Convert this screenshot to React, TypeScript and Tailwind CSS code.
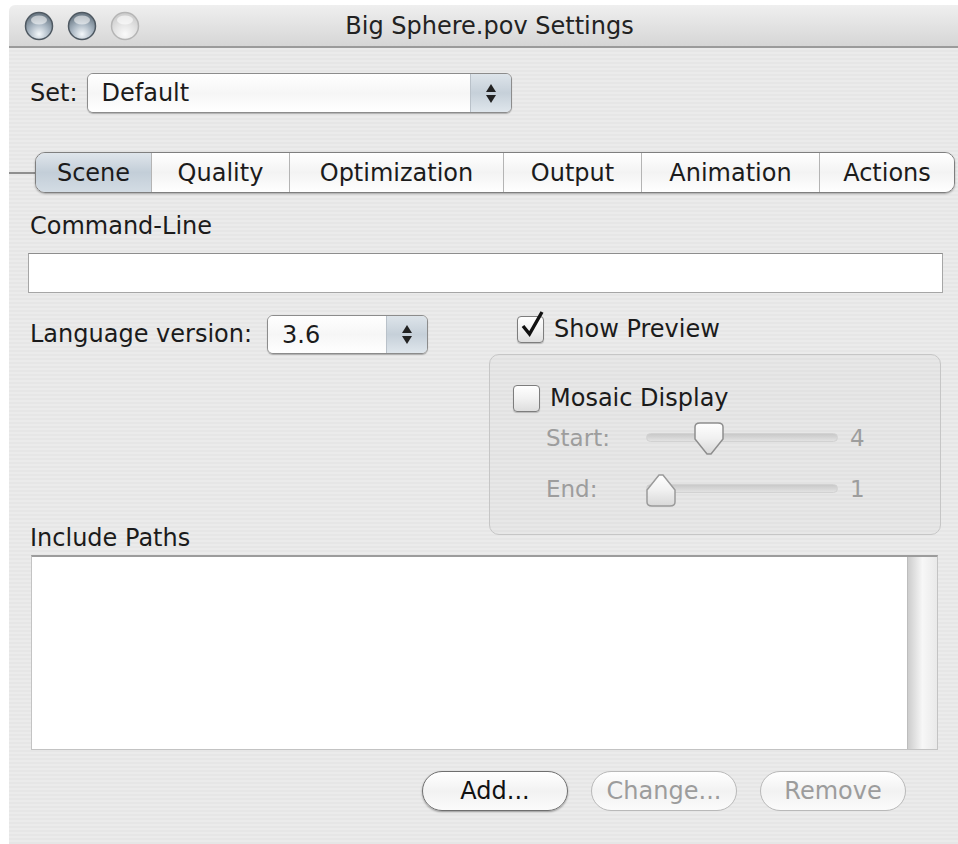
import type { ReactNode } from 'react'

const font = "font-['DejaVu_Sans','Liberation_Sans',sans-serif]"

// Aqua-style popup menu (value + stepper arrows)
function PopUp({ value, className }: { value: string; className: string }) {
  return (
    <div
      className={`flex items-stretch overflow-hidden rounded-[6px] border border-[#8c8c8c] shadow-[0_1px_1px_rgba(0,0,0,0.25)] ${className}`}
    >
      <div className="flex flex-1 items-center bg-gradient-to-b from-[#ffffff] via-[#f6f6f6] to-[#ffffff] pl-[14px] text-[24px] text-[#1b1b1b]">
        {value}
      </div>
      <div className="flex w-[41px] flex-col items-center justify-center gap-[3px] border-l border-[#b9c1c9] bg-gradient-to-b from-[#dde4ea] via-[#c6d0d9] to-[#dfe6ec]">
        <svg width="10" height="8" viewBox="0 0 10 8">
          <path d="M5 0L10 8H0Z" fill="#222" />
        </svg>
        <svg width="10" height="8" viewBox="0 0 10 8">
          <path d="M0 0H10L5 8Z" fill="#222" />
        </svg>
      </div>
    </div>
  )
}

function Checkbox({ checked }: { checked?: boolean }) {
  return (
    <div className="relative h-[27px] w-[27px] shrink-0 rounded-[4px] border border-[#7d7d7d] bg-gradient-to-b from-[#ffffff] via-[#f1f1f1] to-[#dedede] shadow-[0_1px_1px_rgba(0,0,0,0.2)]">
      {checked && (
        <svg className="absolute -top-[6px] left-[3px]" width="24" height="28" viewBox="0 0 24 28">
          <path d="M2 15 L8.5 23 L21 1" fill="none" stroke="#111" strokeWidth="3.4" strokeLinejoin="miter" />
        </svg>
      )}
    </div>
  )
}

function Slider({ label, value, pos, down }: { label: string; value: string; pos: number; down: boolean }) {
  return (
    <div className="flex h-[34px] items-center">
      <span className="w-[100px] text-[23px] text-[#9d9d9d]">{label}</span>
      <div className="relative h-[34px] w-[192px]">
        <div className="absolute left-0 right-0 top-[12px] h-[9px] rounded-full border border-[#d2d2d2] bg-gradient-to-b from-[#c9c9c9] to-[#e2e2e2]" />
        <svg
          className="absolute top-0"
          style={{ left: pos }}
          width="36"
          height="36"
          viewBox="0 0 36 36"
        >
          <defs>
            <linearGradient id={`thumb-${label}`} x1="0" y1="0" x2="0" y2="1">
              <stop offset="0" stopColor="#ffffff" />
              <stop offset="0.5" stopColor="#f0f0f0" />
              <stop offset="1" stopColor="#d8d8d8" />
            </linearGradient>
          </defs>
          {down ? (
            <path
              d="M4 6 Q4 2 9 2 H27 Q32 2 32 6 V18 L20 33 H16 L4 18 Z"
              fill={`url(#thumb-${label})`}
              stroke="#8e8e8e"
              strokeWidth="1.5"
            />
          ) : (
            <path
              d="M16 3 H20 L32 18 V30 Q32 34 27 34 H9 Q4 34 4 30 V18 Z"
              fill={`url(#thumb-${label})`}
              stroke="#9a9a9a"
              strokeWidth="1.5"
            />
          )}
        </svg>
      </div>
      <span className="ml-[12px] text-[23px] text-[#9d9d9d]">{value}</span>
    </div>
  )
}

function PillButton({ children, enabled }: { children: ReactNode; enabled?: boolean }) {
  return (
    <button
      className={`flex h-[40px] w-[146px] items-center justify-center rounded-full bg-gradient-to-b from-[#ffffff] via-[#f2f2f2] to-[#fbfbfb] text-[24px] ${
        enabled
          ? 'border-[1.5px] border-[#6f6f6f] text-[#111] shadow-[0_1px_2px_rgba(0,0,0,0.35)]'
          : 'border border-[#b9b9b9] text-[#9c9c9c]'
      }`}
    >
      {children}
    </button>
  )
}

function TrafficLight({ active }: { active: boolean }) {
  return (
    <svg width="30" height="30" viewBox="0 0 30 30">
      <defs>
        <radialGradient id={active ? 'tl-on' : 'tl-off'} cx="0.5" cy="0.8" r="0.7">
          <stop offset="0" stopColor={active ? '#f4f8fb' : '#fafafa'} />
          <stop offset="0.55" stopColor={active ? '#a9b6c2' : '#e4e4e4'} />
          <stop offset="1" stopColor={active ? '#6f7d89' : '#cfcfcf'} />
        </radialGradient>
      </defs>
      <circle cx="15" cy="15" r="13.5" fill={`url(#${active ? 'tl-on' : 'tl-off'})`} stroke={active ? '#4f5962' : '#b5b5b5'} strokeWidth="1.5" />
      <ellipse cx="15" cy="9" rx="8" ry="4.5" fill="#ffffff" opacity={active ? 0.55 : 0.6} />
    </svg>
  )
}

const tabs = ['Scene', 'Quality', 'Optimization', 'Output', 'Animation', 'Actions']
const tabWidths = ['w-[115px]', 'w-[138px]', 'w-[214px]', 'w-[138px]', 'w-[178px]', 'w-[135px]']

export default function App() {
  return (
    <div className={`min-h-screen bg-white pl-[9px] pt-[5px] ${font}`}>
      <div className="flex h-[839px] flex-col overflow-hidden rounded-tl-[6px]">
        {/* title bar */}
        <div className="relative flex h-[43px] shrink-0 items-center border-b-2 border-[#9b9b9b] bg-gradient-to-b from-[#efefef] to-[#d6d6d6] pl-[15px]">
          <div className="flex gap-[13px]">
            <TrafficLight active />
            <TrafficLight active />
            <TrafficLight active={false} />
          </div>
          <div className="absolute inset-0 flex items-center justify-center pl-[12px] text-[24px] text-[#222]">
            Big Sphere.pov Settings
          </div>
        </div>

        {/* window body */}
        <div className="flex flex-1 flex-col bg-[#e8e8e8] bg-[repeating-linear-gradient(0deg,#e6e6e6_0px,#e6e6e6_2px,#ebebeb_2px,#ebebeb_4px)] text-[24px] leading-[30px] text-[#1b1b1b]">
          <div className="mt-[25px] flex items-center pl-[21px]">
            <span className="mr-[9px]">Set:</span>
            <PopUp value="Default" className="h-[40px] w-[425px]" />
          </div>

          {/* tab strip */}
          <div className="mt-[39px] flex items-center">
            <div className="h-[2px] w-[26px] bg-[#8e8e8e]" />
            <div className="flex h-[41px] overflow-hidden rounded-[10px] border border-[#7f7f7f] shadow-[0_1px_2px_rgba(0,0,0,0.3)]">
              {tabs.map((t, i) => (
                <div
                  key={t}
                  className={`flex ${tabWidths[i]} items-center justify-center ${
                    i > 0 ? 'border-l border-[#b4b4b4]' : ''
                  } ${
                    i === 0
                      ? 'bg-gradient-to-b from-[#dfe5eb] via-[#c3ced8] to-[#d3dce4]'
                      : 'bg-gradient-to-b from-[#ffffff] via-[#f3f3f3] to-[#ffffff]'
                  }`}
                >
                  {t}
                </div>
              ))}
            </div>
          </div>

          <div className="mt-[18px] pl-[21px]">Command-Line</div>
          <div className="ml-[19px] mr-[15px] mt-[12px] h-[40px] shrink-0 border border-[#a6a6a6] border-t-[#8d8d8d] bg-white" />

          <div className="mt-[22px] flex">
            <div className="flex w-[480px] items-start pl-[21px]">
              <span className="mr-[15px] mt-[4px]">Language version:</span>
              <PopUp value="3.6" className="h-[39px] w-[161px]" />
            </div>
            <div className="flex w-[452px] flex-col">
              <div className="ml-[28px] flex h-[28px] items-center gap-[10px]">
                <Checkbox checked />
                <span>Show Preview</span>
              </div>
              <div className="mt-[11px] h-[181px] rounded-[10px] border border-[#c6c6c6] bg-black/[0.015] pl-[23px] pt-[29px]">
                <div className="flex h-[28px] items-center gap-[10px]">
                  <Checkbox />
                  <span>Mosaic Display</span>
                </div>
                <div className="ml-[33px] mt-[9px] flex flex-col gap-[17px]">
                  <Slider label="Start:" value="4" pos={45} down />
                  <Slider label="End:" value="1" pos={-3} down={false} />
                </div>
              </div>
            </div>
          </div>

          <div className="mt-[-12px] pl-[21px]">Include Paths</div>
          <div className="ml-[22px] mr-[20px] mt-[2px] flex h-[195px] shrink-0 border border-[#c3c3c3] border-t-2 border-t-[#9c9c9c] bg-white">
            <div className="flex-1" />
            <div className="w-[30px] border-l border-[#bdbdbd] bg-gradient-to-r from-[#cdcdcd] via-[#f7f7f7] to-[#e9e9e9]" />
          </div>

          <div className="mr-[52px] mt-[21px] flex justify-end gap-[23px]">
            <PillButton enabled>Add...</PillButton>
            <PillButton>Change...</PillButton>
            <PillButton>Remove</PillButton>
          </div>
        </div>
      </div>
    </div>
  )
}
